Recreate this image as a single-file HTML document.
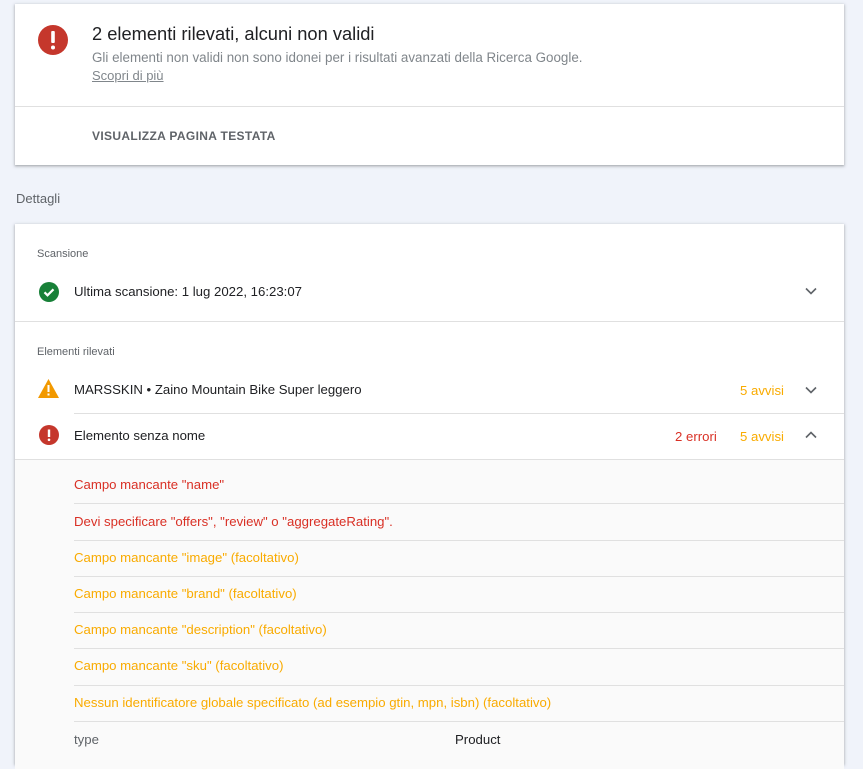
<!DOCTYPE html>
<html><head><meta charset="utf-8"><style>
*{margin:0;padding:0;box-sizing:border-box}
body{width:863px;height:750px;overflow:hidden;background:#f0f3fa;font-family:"Liberation Sans",sans-serif;position:relative;color:#202124}
.card{position:absolute;left:15px;width:829px;background:#fff;box-shadow:0 1px 2px rgba(60,64,67,.3),0 1px 3px 1px rgba(60,64,67,.15)}
.a{position:absolute;white-space:nowrap}
.hr{position:absolute;height:1px;background:#e0e0e0}
.s{font-size:13.2px}
.red{color:#d93025}.or{color:#f9ab00}
</style></head><body>
<div class="card" style="top:4px;height:161px">
  <svg class="a" style="left:22px;top:20px" width="32" height="32" viewBox="0 0 32 32"><circle cx="16" cy="16" r="15" fill="#c5372c"/><rect x="14.2" y="7" width="3.6" height="12" rx="1" fill="#fff"/><circle cx="16" cy="23.5" r="2" fill="#fff"/></svg>
  <div class="a" style="left:77px;top:19px;font-size:18.3px">2 elementi rilevati, alcuni non validi</div>
  <div class="a" style="left:77px;top:46px;font-size:13.4px;color:#80868b">Gli elementi non validi non sono idonei per i risultati avanzati della Ricerca Google.</div>
  <div class="a" style="left:77px;top:64px;font-size:13px;color:#80868b;text-decoration:underline">Scopri di più</div>
  <div class="hr" style="left:0;right:0;top:102px"></div>
  <div class="a" style="left:77px;top:125px;font-size:12px;font-weight:bold;color:#5f6368;letter-spacing:.35px">VISUALIZZA PAGINA TESTATA</div>
</div>
<div class="a" style="left:16px;top:191px;font-size:13px;color:#5f6368">Dettagli</div>
<div class="card" style="top:224px;height:540px">
  <div class="a" style="left:22px;top:24px;font-size:11px;color:#5f6368">Scansione</div>
  <svg class="a" style="left:24px;top:58px" width="20" height="20" viewBox="0 0 20 20"><circle cx="10" cy="10" r="10" fill="#188038"/><path d="M5.5 10.3l3 3 6-6" stroke="#fff" stroke-width="2.2" fill="none"/></svg>
  <div class="a s" style="left:59px;top:60px">Ultima scansione: 1 lug 2022, 16:23:07</div>
  <svg class="a" style="left:790px;top:63px" width="12" height="8" viewBox="0 0 12 8"><path d="M1 1.5l5 5 5-5" stroke="#5f6368" stroke-width="1.6" fill="none"/></svg>
  <div class="hr" style="left:0;right:0;top:97px"></div>
  <div class="a" style="left:22px;top:122px;font-size:11px;color:#5f6368">Elementi rilevati</div>
  <svg class="a" style="left:23px;top:155px" width="21" height="19" viewBox="0 0 21 19"><path d="M10.5 0L21 19H0z" fill="#f29900"/><rect x="9.5" y="6" width="2" height="7" fill="#fff"/><rect x="9.5" y="14.5" width="2" height="2" fill="#fff"/></svg>
  <div class="a s" style="left:59px;top:158px">MARSSKIN • Zaino Mountain Bike Super leggero</div>
  <div class="a s or" style="left:725px;top:159px">5 avvisi</div>
  <svg class="a" style="left:790px;top:162px" width="12" height="8" viewBox="0 0 12 8"><path d="M1 1.5l5 5 5-5" stroke="#5f6368" stroke-width="1.6" fill="none"/></svg>
  <div class="hr" style="left:59px;right:0;top:189px"></div>
  <svg class="a" style="left:24px;top:201px" width="20" height="20" viewBox="0 0 20 20"><circle cx="10" cy="10" r="10" fill="#c5372c"/><rect x="8.8" y="4.5" width="2.4" height="7.5" fill="#fff"/><circle cx="10" cy="14.8" r="1.3" fill="#fff"/></svg>
  <div class="a s" style="left:59px;top:204px">Elemento senza nome</div>
  <div class="a s red" style="left:660px;top:205px">2 errori</div>
  <div class="a s or" style="left:725px;top:205px">5 avvisi</div>
  <svg class="a" style="left:790px;top:207px" width="12" height="8" viewBox="0 0 12 8"><path d="M1 6.5l5-5 5 5" stroke="#5f6368" stroke-width="1.6" fill="none"/></svg>
  <div class="a" style="left:0;right:0;top:235px;height:310px;background:#fafafa;border-top:1px solid #e0e0e0"></div>
  <div class="a s red" style="left:59px;top:253px">Campo mancante "name"</div>
  <div class="hr" style="left:59px;right:0;top:279px"></div>
  <div class="a s red" style="left:59px;top:290px">Devi specificare "offers", "review" o "aggregateRating".</div>
  <div class="hr" style="left:59px;right:0;top:316px"></div>
  <div class="a s or" style="left:59px;top:326px">Campo mancante "image" (facoltativo)</div>
  <div class="hr" style="left:59px;right:0;top:352px"></div>
  <div class="a s or" style="left:59px;top:362px">Campo mancante "brand" (facoltativo)</div>
  <div class="hr" style="left:59px;right:0;top:388px"></div>
  <div class="a s or" style="left:59px;top:398px">Campo mancante "description" (facoltativo)</div>
  <div class="hr" style="left:59px;right:0;top:424px"></div>
  <div class="a s or" style="left:59px;top:434px">Campo mancante "sku" (facoltativo)</div>
  <div class="hr" style="left:59px;right:0;top:461px"></div>
  <div class="a s or" style="left:59px;top:471px">Nessun identificatore globale specificato (ad esempio gtin, mpn, isbn) (facoltativo)</div>
  <div class="hr" style="left:59px;right:0;top:497px"></div>
  <div class="a s" style="left:59px;top:508px;color:#5f6368">type</div>
  <div class="a s" style="left:440px;top:508px">Product</div>
</div>
</body></html>
